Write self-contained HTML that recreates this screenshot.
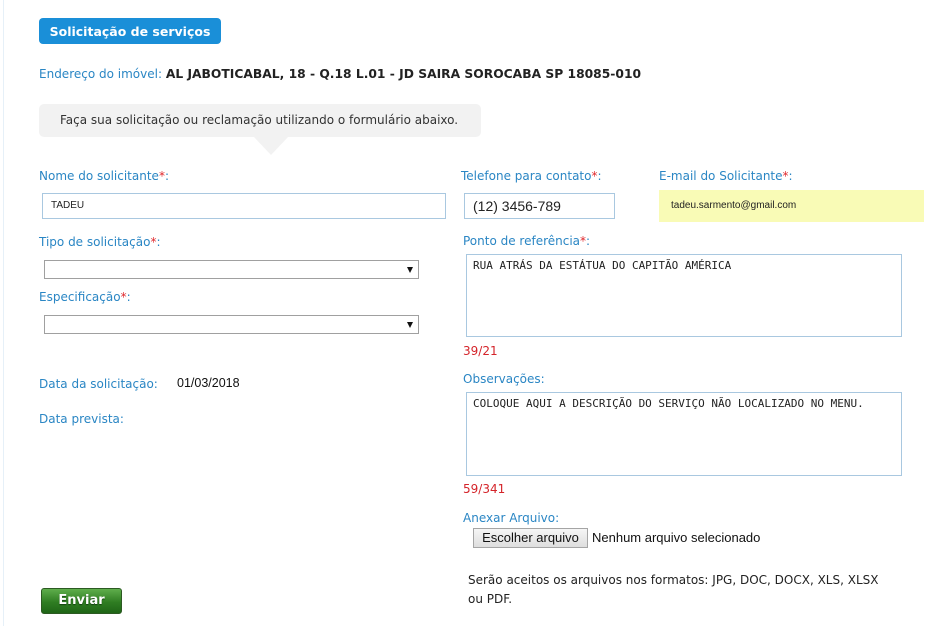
<!DOCTYPE html>
<html><head><meta charset="utf-8"><style>
body{margin:0;width:951px;height:626px;background:#fff;position:relative;overflow:hidden;font-family:"DejaVu Sans",Verdana,sans-serif;}
.a{position:absolute;white-space:nowrap;}
.l{color:#2a86c4;font-size:12px;}
.l b{color:#e0282c;font-weight:normal;}
.box{position:absolute;border:1px solid #a9c8e0;background:#fff;box-sizing:border-box;}
.sel{position:absolute;border:1px solid #a0a0a0;background:#fff;box-sizing:border-box;}
.sel:after{content:"";position:absolute;right:5px;top:6px;border-left:3.5px solid transparent;border-right:3.5px solid transparent;border-top:6px solid #111;}
.ta{position:absolute;border:1px solid #a9c8e0;box-sizing:border-box;font-family:"DejaVu Sans Mono","Liberation Mono",monospace;font-size:11px;color:#222;padding:4px 6px;}
.red{color:#d4242a;font-size:12px;}
</style></head><body>
<div class="a" style="left:3px;top:0;width:1px;height:626px;background:#e6f0f8"></div>
<div class="a" style="left:39px;top:18px;width:182px;height:26px;background:#1a8fd8;border-radius:4px;color:#fff;font-weight:bold;font-size:12.5px;line-height:27px;text-align:center">Solicitação de serviços</div>
<div class="a" style="left:39px;top:66px;font-size:12px;line-height:16px"><span class="l" style="font-size:12px">Endereço do imóvel:</span> <span style="font-weight:bold;font-size:12.3px;color:#222">AL JABOTICABAL, 18 - Q.18 L.01 - JD SAIRA SOROCABA SP 18085-010</span></div>
<div class="a" style="left:39px;top:104px;width:442px;height:33px;background:#f2f2f2;border-radius:5px;font-size:12px;color:#333;line-height:33px;text-indent:21px">Faça sua solicitação ou reclamação utilizando o formulário abaixo.</div>
<div class="a" style="left:254px;top:137px;width:0;height:0;border-left:17px solid transparent;border-right:17px solid transparent;border-top:18px solid #f2f2f2"></div>

<div class="a l" style="left:39px;top:169px">Nome do solicitante<b>*</b>:</div>
<div class="box" style="left:42px;top:193px;width:404px;height:26px;font-family:Arial,'Liberation Sans',sans-serif;font-size:10px;line-height:24px;padding-left:8px;color:#222">TADEU</div>
<div class="a l" style="left:461px;top:169px">Telefone para contato<b>*</b>:</div>
<div class="box" style="left:464px;top:193px;width:151px;height:26px;font-family:'Liberation Sans',Arial,sans-serif;font-size:14px;line-height:24px;padding-left:8px;color:#222">(12) 3456-789</div>
<div class="a l" style="left:659px;top:169px">E-mail do Solicitante<b>*</b>:</div>
<div class="a" style="left:659px;top:190px;width:265px;height:32px;background:#f9fbb6;font-family:'Liberation Sans',Arial,sans-serif;font-size:10px;line-height:32px;padding-left:12px;box-sizing:border-box;color:#222">tadeu.sarmento@gmail.com</div>

<div class="a l" style="left:39px;top:235px">Tipo de solicitação<b>*</b>:</div>
<div class="sel" style="left:44px;top:260px;width:375px;height:19px"></div>
<div class="a l" style="left:39px;top:290px">Especificação<b>*</b>:</div>
<div class="sel" style="left:44px;top:315px;width:375px;height:19px"></div>

<div class="a l" style="left:463px;top:234px">Ponto de referência<b>*</b>:</div>
<div class="ta" style="left:466px;top:254px;width:436px;height:83px">RUA ATRÁS DA ESTÁTUA DO CAPITÃO AMÉRICA</div>
<div class="a red" style="left:463px;top:344px">39/21</div>

<div class="a l" style="left:39px;top:377px">Data da solicitação:</div>
<div class="a" style="left:177px;top:376px;font-family:'Liberation Sans',Arial,sans-serif;font-size:12.5px;color:#111">01/03/2018</div>
<div class="a l" style="left:39px;top:412px">Data prevista:</div>

<div class="a l" style="left:463px;top:372px">Observações:</div>
<div class="ta" style="left:466px;top:392px;width:436px;height:84px">COLOQUE AQUI A DESCRIÇÃO DO SERVIÇO NÃO LOCALIZADO NO MENU.</div>
<div class="a red" style="left:463px;top:482px">59/341</div>

<div class="a l" style="left:463px;top:511px">Anexar Arquivo:</div>
<div class="a" style="left:473px;top:528px;width:115px;height:20px;box-sizing:border-box;border:1px solid #a5a5a5;background:linear-gradient(#f6f6f6,#dedede);font-family:'Liberation Sans',Arial,sans-serif;font-size:13px;line-height:18px;text-align:center;color:#111">Escolher arquivo</div>
<div class="a" style="left:592px;top:530px;font-family:'Liberation Sans',Arial,sans-serif;font-size:13px;color:#111">Nenhum arquivo selecionado</div>

<div class="a" style="left:468px;top:571px;font-size:12px;color:#222;line-height:19px">Serão aceitos os arquivos nos formatos: JPG, DOC, DOCX, XLS, XLSX<br>ou PDF.</div>

<div class="a" style="left:41px;top:588px;width:81px;height:26px;box-sizing:border-box;border:1px solid #2c5a22;border-radius:3px;background:linear-gradient(#5fae4c,#2f7d22 55%,#1f6517);color:#fff;font-weight:bold;font-size:13px;line-height:24px;text-align:center;text-shadow:0 1px 1px #124010">Enviar</div>
</body></html>
